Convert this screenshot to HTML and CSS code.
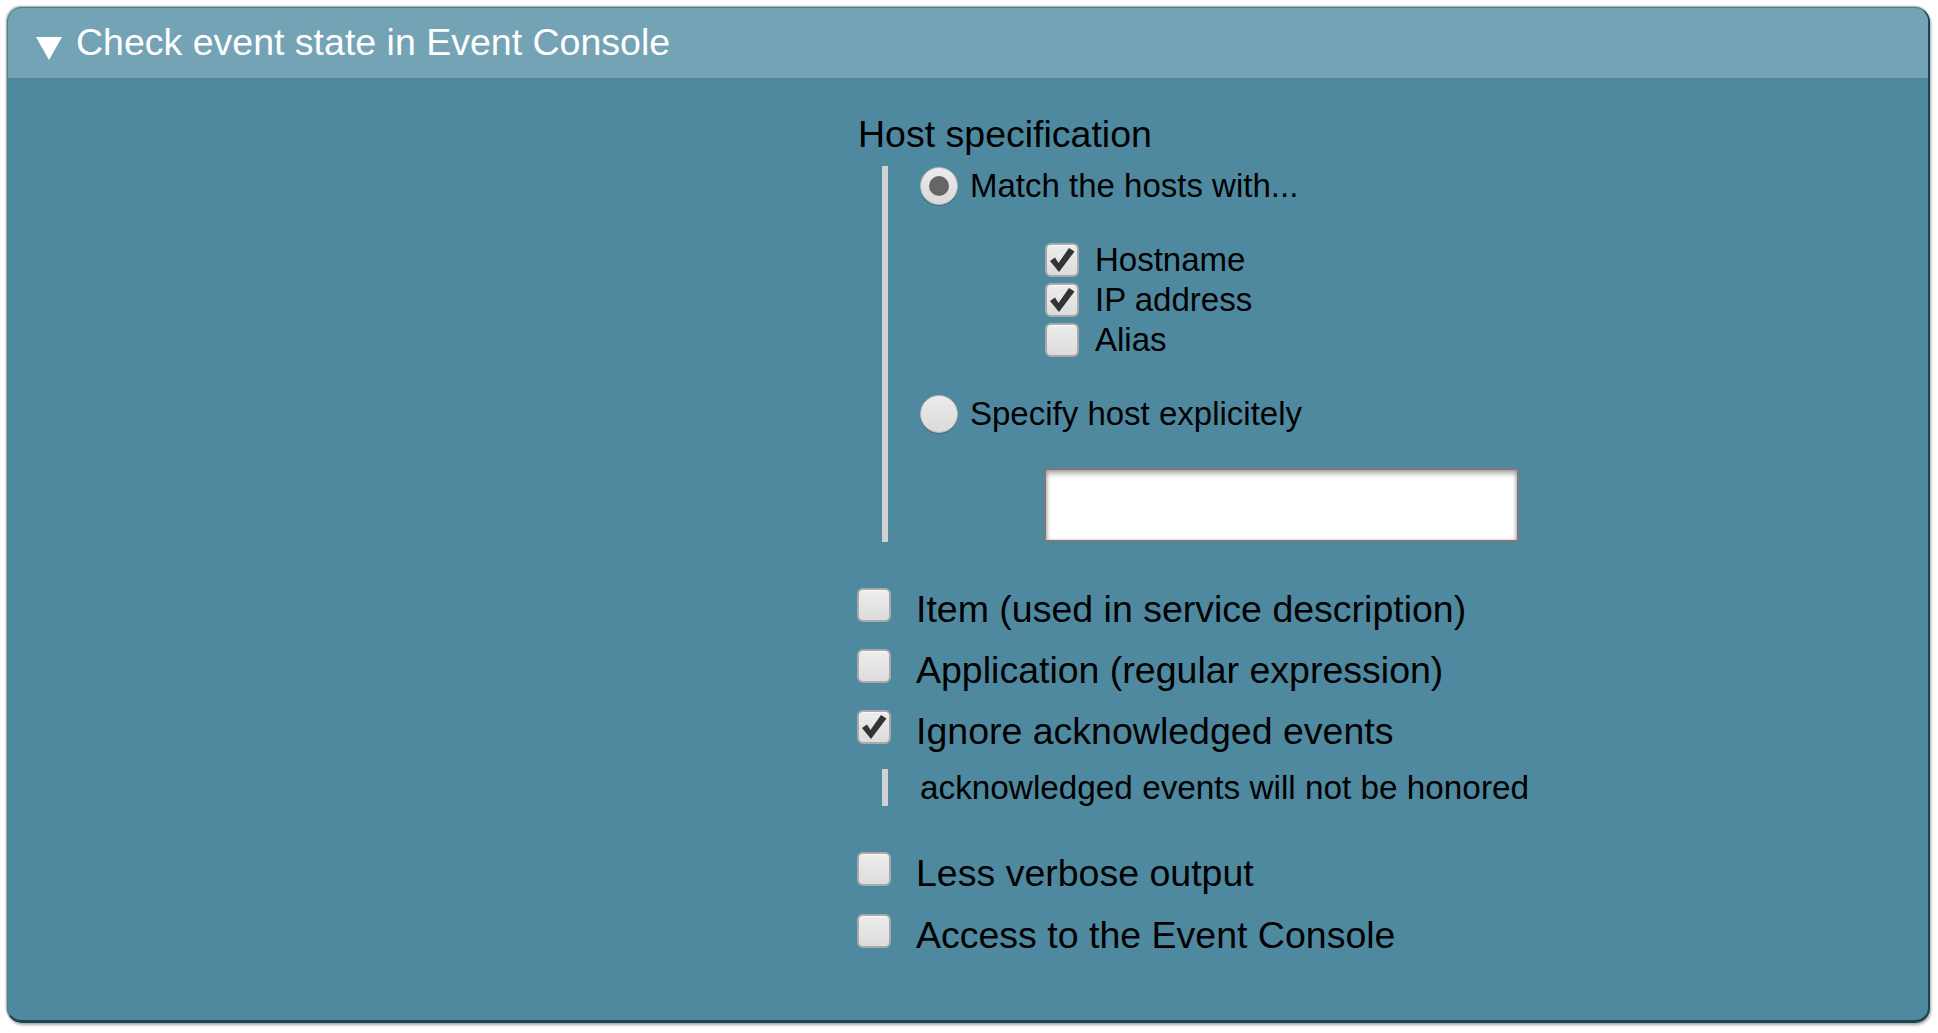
FILE: index.html
```html
<!DOCTYPE html>
<html>
<head>
<meta charset="utf-8">
<link rel="stylesheet" href="styles.css">
</head>
<body>
<div class="page">
  <div class="foldable">
    <div class="head">
      <span class="tri"></span>
      <span class="title">Check event state in Event Console</span>
    </div>
    <div class="form">
      <div class="legend"></div>
      <div class="content">
        <div class="section-title">Host specification</div>
        <div class="indent">
          <div class="radio-row">
            <span class="radio on"><span class="dot"></span></span>
            <span class="label">Match the hosts with...</span>
          </div>
          <div class="checklist">
            <div class="cb-row">
              <span class="cb checked"><svg viewBox="0 0 30 30"><path d="M3 16 L8 12.5 L11.5 18 L22 3 L27.5 6.5 L12 27 Z" fill="#333"/></svg></span>
              <span class="label">Hostname</span>
            </div>
            <div class="cb-row">
              <span class="cb checked"><svg viewBox="0 0 30 30"><path d="M3 16 L8 12.5 L11.5 18 L22 3 L27.5 6.5 L12 27 Z" fill="#333"/></svg></span>
              <span class="label">IP address</span>
            </div>
            <div class="cb-row">
              <span class="cb"></span>
              <span class="label">Alias</span>
            </div>
          </div>
          <div class="radio-row spaced">
            <span class="radio"></span>
            <span class="label">Specify host explicitely</span>
          </div>
          <div class="textbox"></div>
        </div>

        <div class="main-row first">
          <span class="cb big"></span>
          <span class="label">Item (used in service description)</span>
        </div>
        <div class="main-row">
          <span class="cb big"></span>
          <span class="label">Application (regular expression)</span>
        </div>
        <div class="main-row">
          <span class="cb big checked"><svg viewBox="0 0 30 30"><path d="M3 16 L8 12.5 L11.5 18 L22 3 L27.5 6.5 L12 27 Z" fill="#333"/></svg></span>
          <span class="label">Ignore acknowledged events</span>
        </div>
        <div class="help">acknowledged events will not be honored</div>
        <div class="main-row gap-large">
          <span class="cb big"></span>
          <span class="label">Less verbose output</span>
        </div>
        <div class="main-row last">
          <span class="cb big"></span>
          <span class="label">Access to the Event Console</span>
        </div>
      </div>
    </div>
  </div>
</div>
</body>
</html>
```

FILE: styles.css
```css
html, body {
  margin: 0;
  padding: 0;
  background: #ffffff;
}

body {
  font-family: "Liberation Sans", Arial, sans-serif;
  color: #000;
}

.page {
  padding: 7px 8px 10px 7px;
}

.foldable {
  box-sizing: border-box;
  height: 1016px;
  border-radius: 15px;
  background: #4f89a0;
  border: 1px solid #4d7d8f;
  border-right: 2px solid #1d4453;
  border-bottom: 3px solid #1d4453;
  box-shadow: -1px -1px 2px rgba(0, 0, 0, 0.35), 1px 2px 3px rgba(0, 0, 0, 0.35);
  overflow: hidden;
}

.head {
  height: 70px;
  background: #73a3b5;
  display: flex;
  align-items: flex-start;
  padding-left: 28px;
}

.tri {
  width: 0;
  height: 0;
  border-left: 13.5px solid transparent;
  border-right: 13.5px solid transparent;
  border-top: 23px solid #ffffff;
  margin-top: 29px;
}

.title {
  color: #ffffff;
  font-size: 37.5px;
  line-height: 40px;
  margin-top: 14px;
  margin-left: 14px;
}

.form {
  display: grid;
  grid-template-columns: 850px 1fr;
}

.section-title {
  margin-top: 36px;
  font-size: 37.5px;
  line-height: 40px;
}

.indent {
  margin-top: 12px;
  margin-left: 24px;
  border-left: 6px solid #d2d2d2;
  padding-left: 32px;
}

.radio-row {
  display: flex;
  align-items: center;
  height: 40px;
  font-size: 33px;
  line-height: 40px;
}

.radio-row.spaced {
  margin-top: 34px;
}

.radio-row .label {
  margin-left: 12px;
}

.radio {
  box-sizing: border-box;
  width: 38px;
  height: 38px;
  border-radius: 50%;
  background: linear-gradient(#ececec, #dadada);
  border: 1px solid #b8b8b8;
  box-shadow: 0 1px 1px rgba(0, 0, 0, 0.25);
  display: flex;
  align-items: center;
  justify-content: center;
}

.radio .dot {
  width: 20px;
  height: 20px;
  border-radius: 50%;
  background: #666666;
}

.checklist {
  margin-top: 34px;
  padding-left: 125px;
}

.cb-row {
  display: flex;
  align-items: center;
  height: 40px;
  font-size: 33px;
  line-height: 40px;
}

.cb-row .label {
  margin-left: 16px;
}

.cb {
  box-sizing: border-box;
  width: 34px;
  height: 34px;
  border-radius: 6px;
  border: 2px solid #a9a9a9;
  background: linear-gradient(#ededed, #dcdcdc);
  box-shadow: inset 0 1px 0 rgba(255, 255, 255, 0.7);
  display: flex;
  align-items: center;
  justify-content: center;
  flex: none;
}

.cb svg {
  width: 30px;
  height: 30px;
  display: block;
}

.textbox {
  box-sizing: border-box;
  margin-top: 34px;
  margin-left: 124px;
  width: 475px;
  height: 74px;
  background: #ffffff;
  border: 2px solid #7a7a7a;
  box-shadow: inset 0 4px 5px rgba(0, 0, 0, 0.3), inset 2px 0 3px rgba(0, 0, 0, 0.12), inset -2px 0 3px rgba(0, 0, 0, 0.12);
}

.main-row {
  display: flex;
  align-items: flex-start;
  height: 44px;
  margin-top: 17px;
  font-size: 37.5px;
  line-height: 44px;
}

.main-row.first {
  margin-top: 45px;
}

.main-row.gap-large {
  margin-top: 45px;
}

.main-row.last {
  margin-top: 18px;
}

.main-row .cb {
  margin-top: 1px;
  margin-left: -1px;
}

.main-row .label {
  margin-left: 25px;
}

.help {
  margin-top: 16px;
  margin-left: 24px;
  border-left: 6px solid #d2d2d2;
  padding-left: 32px;
  font-size: 33.3px;
  line-height: 37px;
}
```
